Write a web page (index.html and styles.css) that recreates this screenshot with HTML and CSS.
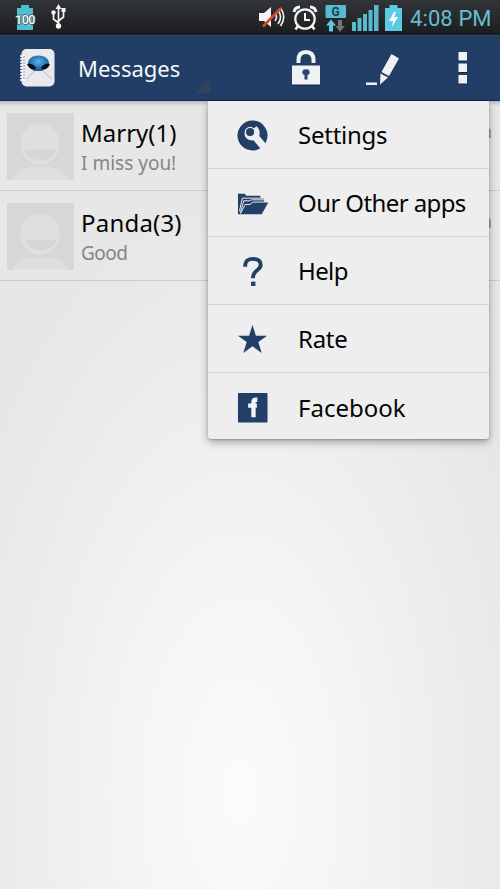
FILE: index.html
```html
<!DOCTYPE html>
<html lang="en">
<head>
<meta charset="utf-8">
<title>Messages</title>
<link rel="stylesheet" href="styles.css">
</head>
<body>
<svg class="defs" width="0" height="0">
  <symbol id="person" viewBox="0 0 67 67">
    <rect width="67" height="67" fill="#d7d7d7"/>
    <path d="M5 67C10 55 21 54 33 54S56 55 62 67Z" fill="#dedede"/>
    <ellipse cx="33" cy="32" rx="22" ry="22.5" fill="#d7d7d7"/>
    <ellipse cx="33" cy="31" rx="20" ry="20.5" fill="#dfdfdf"/>
    <path d="M18 37H49C48 43 42 47 33.500 47S19 43 18 37Z" fill="#d6d6d6"/>
  </symbol>
</svg>
<header class="status">
  <svg class="battery-level" width="26" height="26" viewBox="0 0 26 26">
    <path d="M8 0H16V3H20V25H4V3H8Z" fill="#50bdd2"/>
    <text x="12" y="18.500" text-anchor="middle">100</text>
  </svg>
  <svg class="usb" width="16" height="26" viewBox="0 0 16 26">
    <g fill="none" stroke="#f4f4f4" stroke-width="1.700"><path d="M7.500 3V23M7.500 19L2.500 15V9M7.500 17L12.500 13V7"/></g>
    <g fill="#f4f4f4"><path d="M7.500 0L10.500 5H4.500ZM10.500 4H14.500V8H10.500Z"/><circle cx="2.500" cy="8.500" r="2.200"/><circle cx="7.500" cy="22" r="2.700"/></g>
  </svg>
  <div class="status-right">
    <svg width="28" height="24" viewBox="0 0 28 24">
      <path d="M1 8H6L13 2V22L6 16H1Z" fill="#f2f2f2"/>
      <path d="M17 8Q20 12 17 16M20 5Q25 12 20 19M22.500 3Q29 12 22.500 21" fill="none" stroke="#f2f2f2" stroke-width="1.600"/>
      <path d="M5 21.500L23 3" stroke="#d6492c" stroke-width="2.600"/>
    </svg>
    <svg class="alarm" width="26" height="26" viewBox="0 0 26 26" fill="none" stroke="#f4f4f4">
      <circle cx="13" cy="14" r="9.700" stroke-width="2.200"/>
      <path d="M13 8V15H18" stroke-width="2"/>
      <path d="M2 7Q3 2 8 2M18 2Q23 2 24 7" stroke-width="3"/>
      <path d="M6 21L3.500 24.500M20 21L22.500 24.500" stroke-width="2.500"/>
    </svg>
    <svg class="data" width="22" height="28" viewBox="0 0 22 28">
      <rect x="0.500" width="20.500" height="13" rx="1" fill="#57bbd0"/>
      <text x="10.500" y="11" text-anchor="middle">G</text>
      <path d="M6 14.500L11 20.500H8V26.500H4V20.500H1Z" fill="#58cde1"/>
      <path d="M13 15H17V21H20L15 27L10.500 21H13Z" fill="#717477"/>
    </svg>
    <svg class="signal" width="27" height="26" viewBox="0 0 27 26" fill="#58b9cf">
      <path d="M0 17H4V26H0ZM5.500 13H9.500V26H5.500ZM11 9H15V26H11ZM16.500 5H20.500V26H16.500ZM22 0H26.500V26H22Z"/>
    </svg>
    <svg class="charge" width="17" height="26" viewBox="0 0 17 26">
      <path d="M4.500 0H12.500V3H17V26H0V3H4.500Z" fill="#5acbe0"/>
      <path d="M9 7L4 16H8L7 22L13 12H9L11 7Z" fill="#fff"/>
    </svg>
    <span class="clock">4:08 PM</span>
  </div>
</header>
<nav class="bar">
  <svg class="logo" width="36" height="38" viewBox="0 0 36 38">
    <defs><radialGradient id="face" cx=".5" cy=".4"><stop offset="0" stop-color="#5db7ed"/><stop offset="1" stop-color="#1c5da0"/></radialGradient></defs>
    <rect x="1.500" width="33" height="37.500" rx="5" fill="#e8e9eb"/>
    <path d="M7 30L15 21H22L32 30" fill="none" stroke="#b9bbbe"/>
    <path d="M8 15C8 10 12 6.500 18.500 6.500S29 10 29 15L22 22H14Z" fill="url(#face)"/>
    <path d="M7 15Q13 14 16 19Q15 21.500 11 20Q8 18 7 15ZM30 15Q24 14 21 19Q22 21.500 26 20Q29 18 30 15Z" fill="#080f1f"/>
    <path d="M0 7H5M0 10H5M0 13H5M0 16H5M0 19H5M0 22H5M0 25H5M0 28H5M0 31H5" stroke="#fff" stroke-width="1.600"/>
    <path d="M3 8H5M3 11H5M3 14H5M3 17H5M3 20H5M3 23H5M3 26H5M3 29H5" stroke="#8493aa"/>
  </svg>
  <h1 class="title">Messages</h1>
  <svg class="corner" width="16" height="16" viewBox="0 0 16 16"><path d="M15 1V15H1Z" fill="#33445a"/></svg>
  <svg class="lock" width="28" height="36" viewBox="0 0 28 36">
    <path d="M0 35H28" stroke="#101d35"/>
    <path d="M6.500 13V10C6.500 4.500 9 2 14 2S21.500 4.500 21.500 10V13" fill="none" stroke="#eef2f4" stroke-width="4"/>
    <path d="M0 15.500H28V34.500H0Z" fill="#eef2f4"/>
    <path d="M14 19.500A2.800 2.800 0 0 1 15.500 25V29.500H12.500V25A2.800 2.800 0 0 1 14 19.500Z" fill="#29436a"/>
  </svg>
  <svg class="pen" width="34" height="33" viewBox="0 0 34 33" fill="#eef2f4">
    <path d="M25.500 1L33 5.500L23 23L15.500 19ZM14.500 20.500L22 24.500L14 31.500ZM0 29.500H11V32H0Z"/>
  </svg>
  <svg class="dots" width="9" height="33" viewBox="0 0 9 33"><path d="M.5 9H9M.5 20.500H9M.5 32H9" stroke="#14284a"/><path d="M.5 0H9V8.500H.5ZM.5 11.500H9V20H.5ZM.5 23H9V31.500H.5Z" fill="#eef2f4"/></svg>
</nav>
<main class="content">
  <article class="row">
    <svg class="avatar"><use href="#person"/></svg>
    <div><div class="name">Marry(1)</div><div class="preview">I miss you!</div></div>
    <span class="time">m</span>
  </article>
  <article class="row">
    <svg class="avatar"><use href="#person"/></svg>
    <div><div class="name panda">Panda(3)</div><div class="preview good">Good</div></div>
    <span class="time">m</span>
  </article>
  <div class="menu">
    <div class="item">
      <svg class="icon" viewBox="0 0 32 32"><circle cx="16" cy="16" r="15.500" fill="#223f68"/><path d="M7.500 13Q8 22 17 21L25.500 31L31.500 26.500L23 16.500Q24.500 10 20 6.500L17 9V14L14 17.500Z" fill="#eee"/><circle cx="13.500" cy="12.500" r="5.500" fill="#eee"/><circle cx="13.500" cy="12.500" r="4.200" fill="#223f68"/></svg>
      <span class="settings">Settings</span>
    </div>
    <div class="item">
      <svg class="icon" viewBox="0 0 32 32"><path d="M1 27V6H8L9.500 8H24V11H28V14.500H32.500L25.500 27Z" fill="#223f68"/><path d="M2.500 24L5.500 10.500H24M3.500 25.500L7 13.200H13L15 12.200H28M3.500 26.500L8.500 17H13.500L16.500 14.500H32" fill="none" stroke="#eee" stroke-width="1"/></svg>
      <span class="other">Our Other apps</span>
    </div>
    <div class="item">
      <svg class="icon" viewBox="0 0 32 32"><path d="M8.500 11V9Q9 3 16.500 3Q24.500 3 24.500 9Q24.500 12 20.500 15Q16.500 18 16.500 23" fill="none" stroke="#223f68" stroke-width="4"/><path d="M14.500 26.500H19V31H14.500Z" fill="#223f68"/></svg>
      <span class="help">Help</span>
    </div>
    <div class="item">
      <svg class="icon" viewBox="0 0 32 32"><path d="M16 1L19.500 12H31L22 18.500L25.500 30L16 23L6.500 30L10 18.500L1 12H12.500Z" fill="#223f68"/></svg>
      <span class="rate">Rate</span>
    </div>
    <div class="item">
      <svg class="icon" viewBox="0 0 32 32"><rect x="1" y="1" width="30.500" height="30.500" rx="1" fill="#223f68"/><path d="M21 8H19.500Q17 8 17 11V26M11.500 14H20.500" fill="none" stroke="#eef4f8" stroke-width="4.500"/></svg>
      <span class="facebook">Facebook</span>
    </div>
  </div>
</main>
</body>
</html>
```
FILE: styles.css
```css
* { box-sizing: border-box; }
body { margin: 0; width: 500px; height: 889px; overflow: hidden; display: flex; flex-direction: column; font-family: "Noto Sans", sans-serif; }
svg { display: block; flex: none; }
.defs { position: absolute; }
.status { height: 35px; flex: none; display: flex; align-items: flex-start; background: linear-gradient(#323538, #1b1c1e); padding: 5px 9px 0 13px; }
.battery-level text { font: 500 12.5px "Roboto", sans-serif; letter-spacing: -.4px; fill: #fff; stroke: #394b55; stroke-width: 1.5px; paint-order: stroke; }
.usb { margin: -1px 0 0 12px; }
.status-right { margin-left: auto; display: flex; align-items: flex-start; }
.alarm { margin-left: 6px; }
.data { margin-left: 7px; }
.data text { font: 700 12px "Roboto", sans-serif; fill: #1d414b; }
.signal { margin-left: 5px; }
.charge { margin-left: 6px; }
.clock { margin-left: 8px; width: 81px; font: 22px/28px "Roboto", sans-serif; letter-spacing: .1px; white-space: nowrap; color: #65bed1; }
.bar { height: 66px; flex: none; display: flex; align-items: flex-start; background: #223e67; border-top: 1px solid #2e476a; border-bottom: 1px solid #102b56; padding-left: 20px; }
.logo { margin-top: 13px; }
.title { width: 112px; margin: 16px 0 0 22px; font-weight: 400; font-size: 22px; line-height: 32px; letter-spacing: 0; color: #f5f8fb; }
.corner { margin: 42px 0 0 5px; }
.lock { margin: 14px 0 0 81px; }
.pen { margin: 17px 0 0 46px; }
.dots { margin: 16px 0 0 58px; }
.content { position: relative; flex: 1; background: linear-gradient(#0003, #0000) 0 0 / 100% 5px no-repeat, radial-gradient(ellipse 300px 590px at 240px 690px, #fbfbfb 0%, #f5f5f5 35%, #ededed 70%, #e7e7e7 100%); }
.row { height: 90px; display: flex; align-items: flex-start; padding: 12px 8px 0 7px; border-bottom: 1px solid #cbcbcb; }
.avatar { width: 67px; height: 67px; margin-right: 7px; }
.name { font-size: 24px; line-height: 30px; margin-top: 5px; color: #050505; }
.panda { letter-spacing: .2px; }
.preview { font-size: 19px; line-height: 26px; margin-top: 2px; color: #858585; }
.good { letter-spacing: -.5px; }
.time { margin: 5px 0 0 auto; font-size: 18px; line-height: 26px; color: #929292; }
.menu { position: absolute; left: 208px; top: 0; width: 281px; height: 338px; background: #eee; border-radius: 0 0 3px 3px; box-shadow: 0 3px 8px #0005, 0 1px 2px #0003; }
.item { height: 68px; display: flex; align-items: center; padding: 1px 0 0 29px; border-bottom: 1px solid #d2d2d2; font-size: 24px; line-height: 34px; color: #050505; white-space: nowrap; }
.item:last-child { border: 0; }
.icon { width: 31px; height: 31px; margin-right: 30px; }
.settings { letter-spacing: -.25px; }
.other { letter-spacing: -.6px; }
.help { letter-spacing: -.6px; }
.rate { letter-spacing: -.3px; }
```
